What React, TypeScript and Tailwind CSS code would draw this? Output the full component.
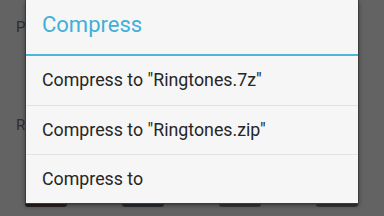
import React from 'react'

const items = ['Compress to "Ringtones.7z"', 'Compress to "Ringtones.zip"', 'Compress to']

const tabs = ['bg-[#2a2322]', 'bg-[#2c2f33]', 'bg-[#3a3a3a]', 'bg-[#3a3a3a]']

export default function App() {
  return (
    <div
      className="relative h-[216px] w-[384px] overflow-hidden bg-[#636363]"
      style={{ fontFamily: 'Roboto, "Liberation Sans", sans-serif' }}
    >
      {/* page behind the dim */}
      <div className="flex h-full flex-col pl-[16px] pt-[19px] text-[15px] text-[#2e2e2e]">
        <span className="leading-[16px]">P</span>
        <span className="mt-[82px] leading-[16px]">R</span>
        <div className="mt-[69px] flex gap-[55px] pl-[9px]">
          {tabs.map((c, i) => (
            <div key={i} className={'h-[5px] w-[42px] rounded-b-[3px] ' + c} />
          ))}
        </div>
      </div>

      {/* dialog */}
      <div className="absolute left-[25px] top-0 flex w-[334px] flex-col border-x border-b border-[#3c3c3c] bg-[#f6f6f6] shadow-[0_2px_4px_rgba(0,0,0,0.4)]">
        <div className="flex h-[54px] items-center pl-[16px] pb-[5px] text-[22px] text-[#3fb0d9]">Compress</div>
        <div className="h-[2px] bg-[#4cb6dc]" />
        {items.map((t, i) => (
          <div
            key={t}
            className={
              'flex h-[49px] items-center pl-[16px] text-[17.8px] text-[#262626] ' +
              (i > 0 ? 'border-t border-[#e2e2e2]' : '')
            }
          >
            {t}
          </div>
        ))}
      </div>
    </div>
  )
}
